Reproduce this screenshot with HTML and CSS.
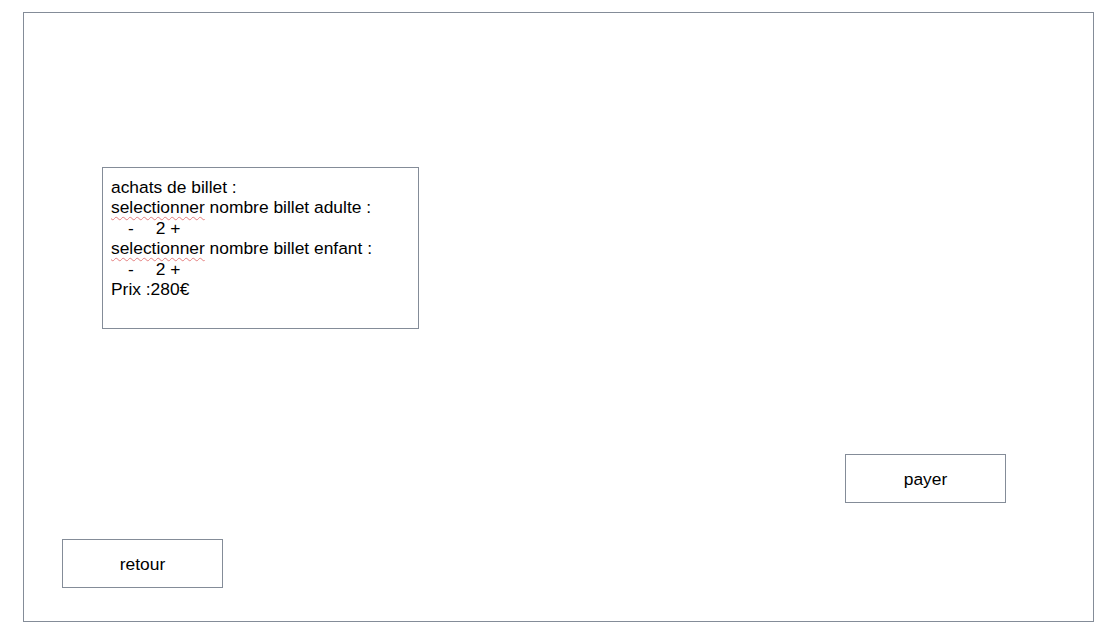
FILE: index.html
```html
<!DOCTYPE html>
<html lang="fr">
<head>
<meta charset="utf-8">
<title>Achat de billets</title>
<link rel="stylesheet" href="styles.css">
</head>
<body>
<div class="frame">
  <div class="panel">
    <div class="line">achats de billet :</div>
    <div class="line"><span class="typo">selectionner</span> nombre billet adulte :</div>
    <div class="line counter"><span class="minus">-</span><span class="qty">2</span> +</div>
    <div class="line"><span class="typo">selectionner</span> nombre billet enfant :</div>
    <div class="line counter"><span class="minus">-</span><span class="qty">2</span> +</div>
    <div class="line">Prix :280€</div>
  </div>
  <div class="btn pay">payer</div>
  <div class="btn back">retour</div>
</div>
</body>
</html>
```
FILE: styles.css
```css
html, body {
  margin: 0;
  padding: 0;
  background: #ffffff;
}
body {
  font-family: "Liberation Sans", Arial, sans-serif;
  font-size: 17.4px;
  color: #000000;
}
.frame {
  box-sizing: border-box;
  margin: 12px 0 0 23px;
  width: 1071px;
  height: 610px;
  border: 1px solid #848c98;
  padding-top: 154px;
}
.panel {
  box-sizing: border-box;
  margin-left: 78px;
  width: 317px;
  height: 162px;
  border: 1px solid #848c98;
  padding: 9px 8px;
}
.line {
  line-height: 20.4px;
  white-space: pre;
}
.minus {
  margin-left: 17px;
}
.qty {
  margin-left: 22px;
}
.typo {
  text-decoration: underline wavy #e48080;
  text-decoration-thickness: 1px;
  text-underline-offset: 3px;
}
.btn {
  box-sizing: border-box;
  width: 161px;
  height: 49px;
  padding-top: 1px;
  border: 1px solid #848c98;
  display: flex;
  align-items: center;
  justify-content: center;
}
.pay {
  margin: 125px 0 0 821px;
}
.back {
  margin: 36px 0 0 38px;
}
```
